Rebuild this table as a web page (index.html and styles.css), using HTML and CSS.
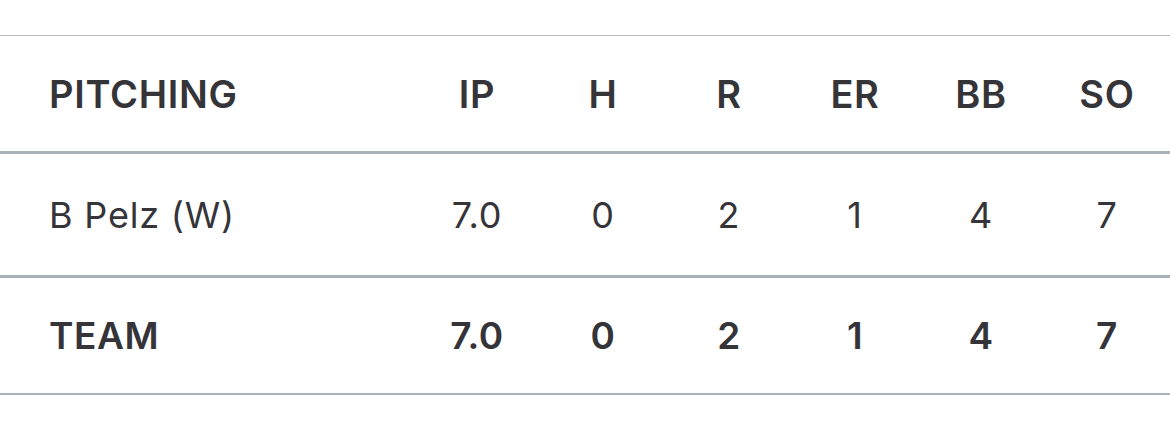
FILE: index.html
```html
<!DOCTYPE html>
<html lang="en">
<head>
<meta charset="utf-8">
<title>Pitching</title>
<link rel="stylesheet" href="styles.css">
</head>
<body>
<div class="wrap">
  <table class="box">
    <thead>
      <tr class="row head">
        <th class="name">PITCHING</th>
        <th class="stat">IP</th>
        <th class="stat">H</th>
        <th class="stat">R</th>
        <th class="stat">ER</th>
        <th class="stat">BB</th>
        <th class="stat">SO</th>
      </tr>
    </thead>
    <tbody>
      <tr class="row player">
        <td class="name">B Pelz (W)</td>
        <td class="stat">7.0</td>
        <td class="stat">0</td>
        <td class="stat">2</td>
        <td class="stat">1</td>
        <td class="stat">4</td>
        <td class="stat">7</td>
      </tr>
      <tr class="row team">
        <td class="name">TEAM</td>
        <td class="stat">7.0</td>
        <td class="stat">0</td>
        <td class="stat">2</td>
        <td class="stat">1</td>
        <td class="stat">4</td>
        <td class="stat">7</td>
      </tr>
    </tbody>
  </table>
</div>
</body>
</html>
```

FILE: styles.css
```css
html, body {
  margin: 0;
  padding: 0;
  background: #ffffff;
}

.wrap {
  padding-top: 35px;
}

.box {
  width: 100%;
  border-collapse: collapse;
  border-spacing: 0;
  border-top: 1px solid #b6babe;
  font-family: "Inter", "Liberation Sans", sans-serif;
  color: #343439;
  font-size: 36px;
}

.row th,
.row td {
  padding: 0;
  vertical-align: middle;
}

.head {
  height: 117px;
  border-bottom: 3px solid #a9b1b9;
}

.player {
  height: 124px;
  border-bottom: 3px solid #a9b1b9;
}

.team {
  height: 117px;
  border-bottom: 2px solid #a9b1b9;
}

.name {
  text-align: left;
  padding-left: 49px !important;
}

.stat {
  width: 126px;
  text-align: center;
}

.head th {
  font-weight: 600;
  font-size: 38px;
  letter-spacing: 0.7px;
}

.player td {
  font-weight: 400;
  letter-spacing: 0.8px;
}

.team td {
  font-weight: 600;
  font-size: 37px;
  letter-spacing: 0.6px;
}
```
